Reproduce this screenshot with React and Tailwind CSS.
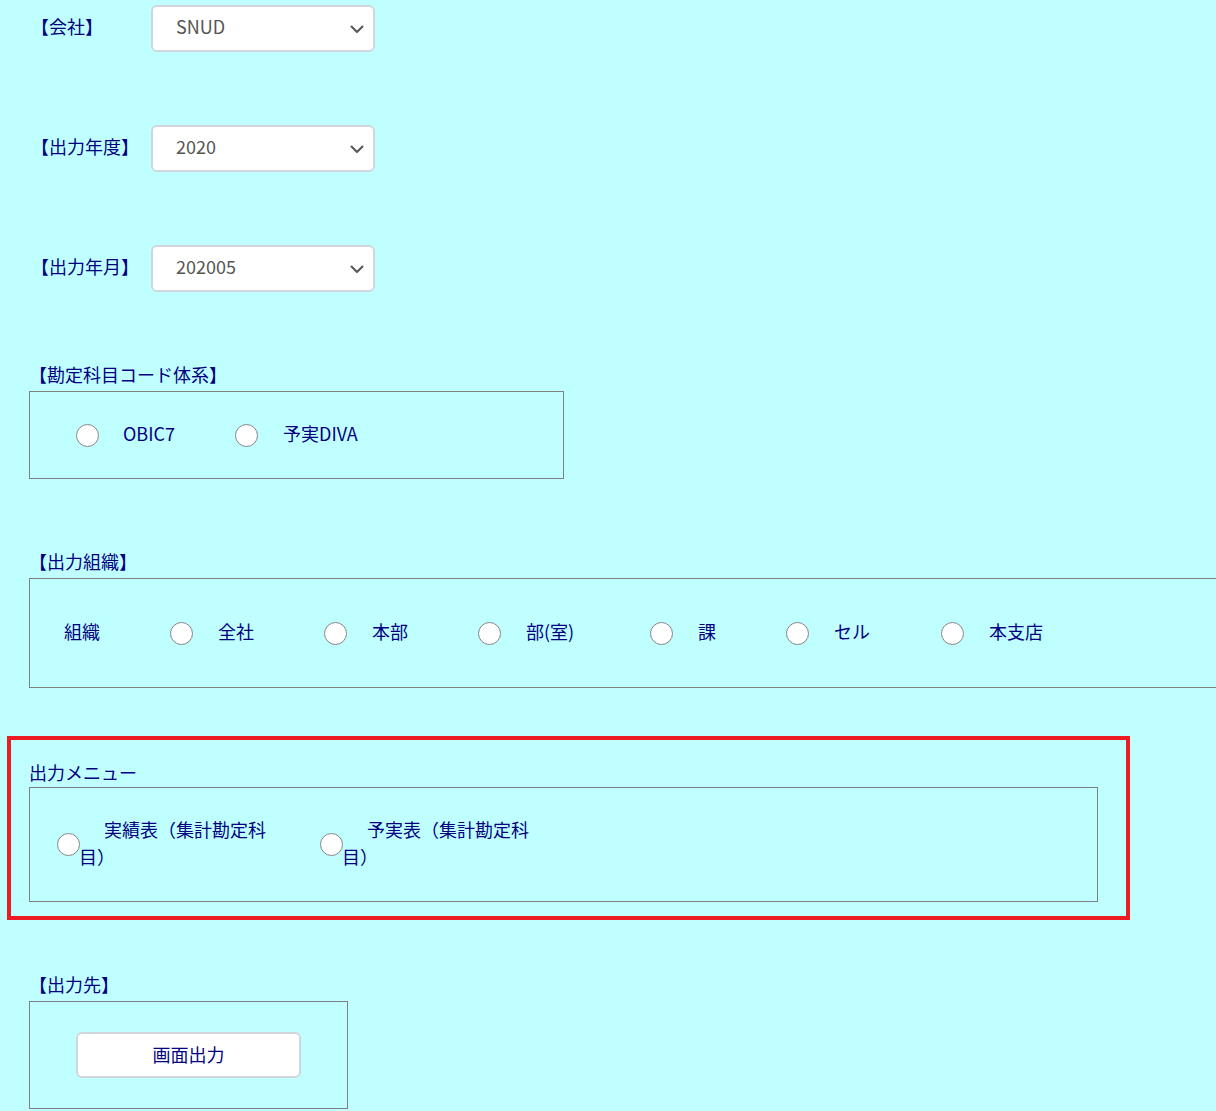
import React from "react";

const Radio = () => (
  <span className="inline-block w-[23px] h-[23px] shrink-0 rounded-full border border-[#858585] bg-white" />
);

const SelectBox = ({ value }) => (
  <div className="flex items-center justify-between w-[224px] h-[47px] pl-[23px] pr-[6px] bg-white border-2 border-[#d2d6dc] rounded-[6px] text-[#555]">
    <span className="pb-[5px]">{value}</span>
    <svg width="20" height="20" viewBox="0 0 20 20" fill="none">
      <path d="M4.5 7.5 L10 13 L15.5 7.5" stroke="#555" strokeWidth="2" strokeLinecap="round" strokeLinejoin="round" />
    </svg>
  </div>
);

const SelectRow = ({ label, value, className }) => (
  <div className={"flex items-center pl-[31px] " + className}>
    <span className="w-[120px] pb-[5px]">{label}</span>
    <SelectBox value={value} />
  </div>
);

const orgItems = [
  { label: "全社", w: "w-[106px]" },
  { label: "本部", w: "w-[106px]" },
  { label: "部(室)", w: "w-[124px]" },
  { label: "課", w: "w-[88px]" },
  { label: "セル", w: "w-[107px]" },
  { label: "本支店", w: "w-[100px]" },
];

export default function App() {
  return (
    <div className="min-h-screen w-full overflow-hidden bg-[#c0ffff] text-[#000080] text-[18px] leading-[24px] font-['Noto_Sans_CJK_JP','Liberation_Sans',sans-serif] pt-[5px] pb-[10px]">
      <SelectRow label="【会社】" value="SNUD" className="" />
      <SelectRow label="【出力年度】" value="2020" className="mt-[73px]" />
      <SelectRow label="【出力年月】" value="202005" className="mt-[73px]" />

      {/* 勘定科目コード体系 */}
      <div className="pl-[29px] mt-[72px]">
        <div className="h-[24px] leading-[21px]">【勘定科目コード体系】</div>
        <div className="mt-[3px] w-[535px] h-[88px] border border-[#808080] flex items-center pl-[46px]">
          <Radio />
          <span className="ml-[24px] w-[112px] pb-[4px]">OBIC7</span>
          <Radio />
          <span className="ml-[25px] pb-[4px]">予実DIVA</span>
        </div>
      </div>

      {/* 出力組織 */}
      <div className="pl-[29px] mt-[72px]">
        <div className="h-[24px] leading-[21px]">【出力組織】</div>
        <div className="mt-[3px] w-[1210px] h-[110px] border border-[#808080] flex items-center pl-[34px]">
          <span className="w-[106px] pb-[4px]">組織</span>
          {orgItems.map((it) => (
            <React.Fragment key={it.label}>
              <Radio />
              <span className={"ml-[25px] pb-[4px] " + it.w}>{it.label}</span>
            </React.Fragment>
          ))}
        </div>
      </div>

      {/* 出力メニュー */}
      <div className="ml-[7px] mt-[48px] w-[1123px] h-[184px] border-4 border-[#ed1c24] pl-[18px] pt-[21px]">
        <div className="h-[24px] leading-[22px]">出力メニュー</div>
        <div className="mt-[2px] w-[1069px] h-[115px] border border-[#808080] flex items-center pl-[27px]">
          <Radio />
          <div className="w-[200px] mr-[41px] indent-[25px] leading-[27px] -ml-[1px] pb-[3px]">実績表（集計勘定科目）</div>
          <Radio />
          <div className="w-[200px] indent-[25px] leading-[27px] -ml-[1px] pb-[3px]">予実表（集計勘定科目）</div>
        </div>
      </div>

      {/* 出力先 */}
      <div className="pl-[29px] mt-[54px]">
        <div className="h-[24px] leading-[21px]">【出力先】</div>
        <div className="mt-[3px] w-[319px] h-[108px] border border-[#808080] flex items-center pl-[46px]">
          <button className="w-[225px] h-[46px] pb-[3px] bg-white border-2 border-[#d2d6dc] rounded-[6px] text-[#000080]">
            画面出力
          </button>
        </div>
      </div>
    </div>
  );
}
